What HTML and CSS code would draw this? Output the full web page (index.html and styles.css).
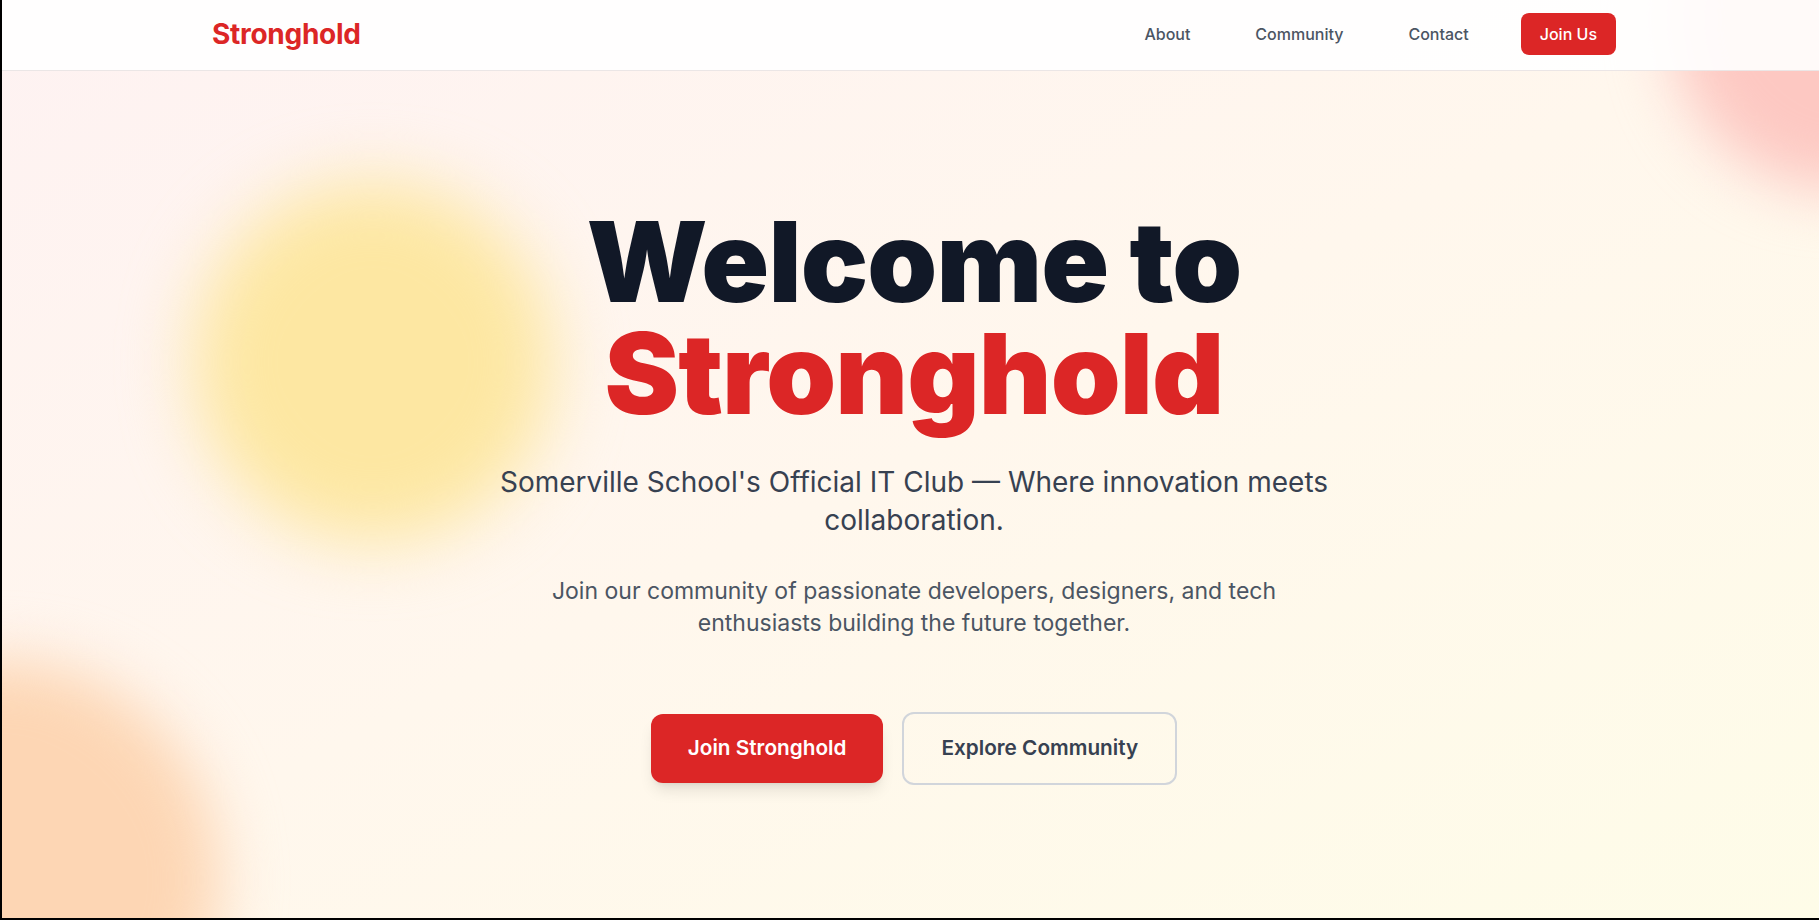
FILE: index.html
```html
<!DOCTYPE html>
<html lang="en">
<head>
<meta charset="utf-8">
<title>Stronghold</title>
<link rel="stylesheet" href="styles.css">
</head>
<body>
<div class="page">
  <div class="blob blob-yellow"></div>
  <div class="blob blob-orange"></div>
  <div class="blob blob-red"></div>

  <header class="nav">
    <div class="nav-inner">
      <a class="logo" href="#">Stronghold</a>
      <nav class="links">
        <a class="link" href="#">About</a>
        <a class="link" href="#">Community</a>
        <a class="link" href="#">Contact</a>
        <a class="btn-nav" href="#">Join Us</a>
      </nav>
    </div>
  </header>

  <main class="hero">
    <div class="hero-content">
      <h1 class="title">
        <span class="title-dark">Welcome to</span>
        <span class="title-red">Stronghold</span>
      </h1>
      <p class="tagline">Somerville School's Official IT Club — Where innovation meets collaboration.</p>
      <p class="lead">Join our community of passionate developers, designers, and tech enthusiasts building the future together.</p>
      <div class="actions">
        <a class="btn btn-primary" href="#">Join Stronghold</a>
        <a class="btn btn-outline" href="#">Explore Community</a>
      </div>
    </div>
  </main>
</div>
</body>
</html>
```

FILE: styles.css
```css
* {
  box-sizing: border-box;
}

html, body {
  margin: 0;
  padding: 0;
}

body {
  font-family: Inter, "Noto Sans", "Liberation Sans", sans-serif;
  background: #000;
}

a {
  text-decoration: none;
}

.page {
  position: relative;
  height: 920px;
  overflow: hidden;
  border-left: 2px solid #000;
  border-bottom: 2px solid #000;
  padding-left: 7px;
  background: linear-gradient(to bottom right, #fef2f2 0%, #fff7ed 50%, #fefce8 100%);
  display: flex;
  flex-direction: column;
}

.blob {
  position: absolute;
  border-radius: 50%;
  z-index: 0;
}

.blob-yellow {
  left: 191px;
  top: 182px;
  width: 360px;
  height: 360px;
  background: #fde7a2;
  filter: blur(34px);
}

.blob-orange {
  left: -222px;
  top: 660px;
  width: 440px;
  height: 440px;
  background: #fdd6b4;
  filter: blur(30px);
}

.blob-red {
  left: 1668px;
  top: -150px;
  width: 340px;
  height: 340px;
  background: #fdc8c2;
  filter: blur(30px);
}

.nav {
  position: relative;
  z-index: 2;
  margin-left: -7px;
  padding-left: 7px;
  height: 71px;
  flex: none;
  background: rgba(255, 255, 255, 0.9);
  border-bottom: 1px solid #ebe6e6;
}

.nav-inner {
  width: 1404px;
  height: 68px;
  margin: 0 auto;
  display: flex;
  align-items: center;
  justify-content: space-between;
}

.logo {
  font-size: 28px;
  font-weight: 700;
  color: #dc2626;
  letter-spacing: -0.01em;
}

.links {
  display: flex;
  align-items: center;
  gap: 52px;
}

.link + .link {
  margin-left: 13px;
}

.link {
  font-size: 16px;
  font-weight: 500;
  color: #4b5563;
}

.btn-nav {
  display: inline-block;
  font-size: 16px;
  font-weight: 500;
  line-height: 24px;
  color: #fff;
  background: #dc2626;
  border-radius: 8px;
  padding: 9px 19px;
}

.hero {
  position: relative;
  z-index: 1;
  flex: 1;
  display: flex;
  align-items: center;
  justify-content: center;
}

.hero-content {
  display: flex;
  flex-direction: column;
  align-items: center;
  text-align: center;
}

.title {
  margin: 0 0 34px;
  font-size: 112px;
  font-weight: 900;
  line-height: 1;
  letter-spacing: -0.008em;
}

.title-dark {
  display: block;
  color: #111827;
}

.title-red {
  display: block;
  color: #dc2626;
}

.tagline {
  margin: 0 0 36px;
  max-width: 896px;
  font-size: 28px;
  line-height: 38px;
  font-weight: 400;
  color: #374151;
}

.lead {
  margin: 0;
  max-width: 768px;
  font-size: 23px;
  line-height: 32px;
  color: #4b5563;
}

.actions {
  margin-top: 73px;
  display: flex;
  align-items: center;
  gap: 19px;
}

.btn {
  display: inline-block;
  font-size: 20.75px;
  font-weight: 600;
  line-height: 30px;
  border-radius: 12px;
}

.btn-primary {
  padding: 19.5px 37px;
  background: #dc2626;
  color: #fff;
  box-shadow: 0 10px 15px -3px rgba(0, 0, 0, 0.1), 0 4px 6px -4px rgba(0, 0, 0, 0.1);
}

.btn-outline {
  padding: 19.5px 37px;
  border: 2px solid #d1d5db;
  color: #374151;
  background: transparent;
}
```
